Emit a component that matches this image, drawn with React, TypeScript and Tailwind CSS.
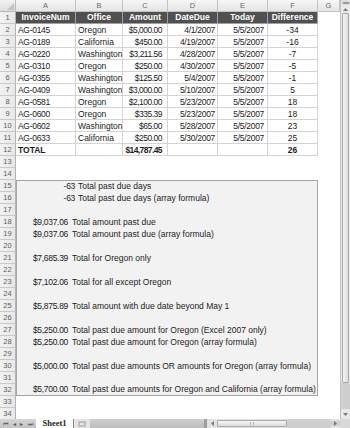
import React from "react";

const colW = [60, 47, 45, 50, 50, 50, 22];
const letters = ["A", "B", "C", "D", "E", "F", "G"];

const data: string[][] = [
  ["AG-0145", "Oregon", "$5,000.00", "4/1/2007", "5/5/2007", "-34"],
  ["AG-0189", "California", "$450.00", "4/19/2007", "5/5/2007", "-16"],
  ["AG-0220", "Washington", "$3,211.56", "4/28/2007", "5/5/2007", "-7"],
  ["AG-0310", "Oregon", "$250.00", "4/30/2007", "5/5/2007", "-5"],
  ["AG-0355", "Washington", "$125.50", "5/4/2007", "5/5/2007", "-1"],
  ["AG-0409", "Washington", "$3,000.00", "5/10/2007", "5/5/2007", "5"],
  ["AG-0581", "Oregon", "$2,100.00", "5/23/2007", "5/5/2007", "18"],
  ["AG-0600", "Oregon", "$335.39", "5/23/2007", "5/5/2007", "18"],
  ["AG-0602", "Washington", "$65.00", "5/28/2007", "5/5/2007", "23"],
  ["AG-0633", "California", "$250.00", "5/30/2007", "5/5/2007", "25"],
];

const boxLines: Record<number, [string, string]> = {
  15: ["-63", "Total past due days"],
  16: ["-63", "Total past due days (array formula)"],
  18: ["$9,037.06", "Total amount past due"],
  19: ["$9,037.06", "Total amount past due (array formula)"],
  21: ["$7,685.39", "Total for Oregon only"],
  23: ["$7,102.06", "Total for all except Oregon"],
  25: ["$5,875.89", "Total amount with due date beyond May 1"],
  27: ["$5,250.00", "Total past due amount for Oregon (Excel 2007 only)"],
  28: ["$5,250.00", "Total past due amount for Oregon (array formula)"],
  30: ["$5,000.00", "Total past due amounts OR amounts for Oregon (array formula)"],
  32: ["$5,700.00", "Total past due amounts for Oregon and California (array formula)"],
};

const font = { fontFamily: '"Liberation Sans", Arial, sans-serif' };

function DataCell({
  w,
  children,
  align,
  bold,
}: {
  w: number;
  children?: React.ReactNode;
  align: "l" | "r" | "c";
  bold?: boolean;
}) {
  const a =
    align === "l" ? "justify-start pl-[2px]" : align === "r" ? "justify-end pr-[2px]" : "justify-center";
  return (
    <div
      className={`flex h-[12px] items-center overflow-hidden whitespace-nowrap border-b border-r border-[#d4d4d4] text-[8.5px] leading-[12px] text-[#1c1c1c] ${a} ${
        bold ? "font-bold" : ""
      }`}
      style={{ width: w }}
    >
      {children}
    </div>
  );
}

export default function App() {
  const rows = Array.from({ length: 34 }, (_, i) => i + 1);
  return (
    <div className="flex h-[428px] w-[350px] flex-col overflow-hidden bg-white" style={font}>
      <div className="flex h-[419px] overflow-hidden">
        {/* main sheet */}
        <div className="flex w-[340px] flex-col">
          {/* column headers */}
          <div className="flex h-[12px] shrink-0">
            <div className="relative h-[12px] w-[16px] border-b border-r border-[#b9b9b9] bg-gradient-to-b from-[#f3f3f3] to-[#dedede]">
              <svg className="absolute bottom-[1px] right-[1px]" width="7" height="7" viewBox="0 0 7 7">
                <polygon points="7,0 7,7 0,7" fill="#c4c4c4" />
              </svg>
            </div>
            {colW.map((w, i) => (
              <div
                key={i}
                className="flex h-[12px] items-center justify-center border-b border-r border-[#c3c3c3] bg-gradient-to-b from-[#f7f7f7] to-[#e4e4e4] text-[7.5px] text-[#6a6a6a]"
                style={{ width: w }}
              >
                {letters[i]}
              </div>
            ))}
          </div>
          <div className="flex">
            {/* row headers */}
            <div className="flex w-[16px] shrink-0 flex-col">
              {rows.map((r) => (
                <div
                  key={r}
                  className="flex h-[12px] items-center justify-center border-b border-r border-[#c9c9c9] border-r-[#b3b3b3] bg-gradient-to-r from-[#f2f2f2] to-[#e8e8e8] text-[7.5px] text-[#5e5e5e]"
                >
                  {r}
                </div>
              ))}
            </div>
            {/* cells */}
            <div className="flex flex-1 flex-col">
              {/* header row 1 */}
              <div className="flex h-[12px]">
                {["InvoiceNum", "Office", "Amount", "DateDue", "Today", "Difference"].map((h, i) => (
                  <div
                    key={h}
                    className="flex h-[12px] items-center justify-center whitespace-nowrap border-r border-b border-[#a0a0a0] bg-[#505050] text-[8.5px] font-bold text-white"
                    style={{ width: colW[i] }}
                  >
                    {h}
                  </div>
                ))}
              </div>
              {data.map((d, ri) => (
                <div key={ri} className="flex h-[12px]">
                  <DataCell w={colW[0]} align="l">
                    <span className="tracking-[-0.3px]">{d[0]}</span>
                  </DataCell>
                  <DataCell w={colW[1]} align="l">
                    {d[1]}
                  </DataCell>
                  <DataCell w={colW[2]} align="r">
                    <span className="pr-[3px] tracking-[-0.5px]">{d[2]}</span>
                  </DataCell>
                  <DataCell w={colW[3]} align="r">
                    <span className="tracking-[-0.3px]">{d[3]}</span>
                  </DataCell>
                  <DataCell w={colW[4]} align="r">
                    <span className="pr-[1px] tracking-[-0.3px]">{d[4]}</span>
                  </DataCell>
                  <DataCell w={colW[5]} align="c">
                    {d[5]}
                  </DataCell>
                </div>
              ))}
              <div className="flex h-[12px]">
                <DataCell w={colW[0]} align="l" bold>
                  TOTAL
                </DataCell>
                <DataCell w={colW[1]} align="l" />
                <DataCell w={colW[2]} align="r" bold>
                  <span className="pr-[3px] tracking-[-0.6px]">$14,787.45</span>
                </DataCell>
                <DataCell w={colW[3]} align="r" />
                <DataCell w={colW[4]} align="r" />
                <DataCell w={colW[5]} align="c" bold>
                  26
                </DataCell>
              </div>
              {/* blank rows 13-14 */}
              <div className="h-[24px]" />
              {/* text box rows 15-32 */}
              <div className="flex h-[216px] w-[302px] flex-col border border-[#a6a6a6] bg-[#f2f2f2]">
                {Array.from({ length: 18 }, (_, i) => i + 15).map((r) => {
                  const line = boxLines[r];
                  const isDollar = line && line[0].startsWith("$");
                  return (
                    <div
                      key={r}
                      className={`flex items-center text-[8.5px] text-[#1c1c1c] ${
                        r === 15 || r === 32 ? "h-[11px]" : "h-[12px]"
                      }`}
                    >
                      {line && (
                        <>
                          <span
                            className={`shrink-0 whitespace-nowrap text-right tracking-[-0.3px] ${
                              isDollar ? "w-[51px]" : "w-[58px]"
                            }`}
                          >
                            {line[0]}
                          </span>
                          <span className={`whitespace-nowrap ${isDollar ? "ml-[4px]" : "ml-[3px]"}`}>
                            {line[1]}
                          </span>
                        </>
                      )}
                    </div>
                  );
                })}
              </div>
            </div>
          </div>
        </div>
        {/* vertical scrollbar */}
        <div className="flex w-[10px] flex-col border-l border-[#c4c4c4] bg-[#e9e9e9]">
          <div className="flex h-[5px] items-center justify-center bg-[#dcdcdc]">
            <div className="h-[2px] w-[6px] bg-[#9a9a9a]" />
          </div>
          <div className="flex h-[8px] items-center justify-center">
            <svg width="5" height="3" viewBox="0 0 5 3">
              <polygon points="0,3 5,3 2.5,0" fill="#7a7a7a" />
            </svg>
          </div>
          <div className="mx-[1px] h-[370px] rounded-[1px] border border-[#a9a9a9] bg-gradient-to-r from-[#f4f4f4] to-[#dcdcdc]" />
          <div className="flex-1 bg-[#cfcfcf]" />
          <div className="flex h-[10px] items-center justify-center">
            <svg width="5" height="3" viewBox="0 0 5 3">
              <polygon points="0,0 5,0 2.5,3" fill="#7a7a7a" />
            </svg>
          </div>
        </div>
      </div>
      {/* bottom tab bar */}
      <div className="flex h-[9px] items-stretch bg-gradient-to-b from-[#d6d6d6] to-[#c2c2c2]">
        <div className="flex w-[36px] items-center justify-around px-[1px] text-[6px] leading-none text-[#555]">
          <span>⏮</span>
          <span>◂</span>
          <span>▸</span>
          <span>⏭</span>
        </div>
        <div
          className="flex w-[38px] items-center justify-center border-r border-[#888] bg-white text-[8.5px] font-bold leading-none text-[#222]"
          style={{ fontFamily: '"Liberation Serif", serif' }}
        >
          Sheet1
        </div>
        <div className="flex w-[16px] items-center justify-center bg-[#e4e4e4]">
          <svg width="8" height="6" viewBox="0 0 8 6">
            <rect x="1" y="1" width="6" height="4" fill="none" stroke="#8a8a8a" strokeWidth="0.8" />
          </svg>
        </div>
        <div className="w-[114px] bg-gradient-to-b from-[#cfcfcf] to-[#bdbdbd]" />
        <div className="w-[3px] bg-[#9d9d9d]" />
        <div className="flex flex-1 items-center bg-[#e2e2e2]">
          <div className="flex w-[10px] items-center justify-center">
            <svg width="3" height="5" viewBox="0 0 3 5">
              <polygon points="3,0 3,5 0,2.5" fill="#7a7a7a" />
            </svg>
          </div>
          <div className="flex h-[7px] w-[70px] items-center justify-center rounded-[1px] border border-[#a9a9a9] bg-gradient-to-b from-[#f6f6f6] to-[#dcdcdc]">
            <div className="h-[3px] w-[4px] border-x border-[#b5b5b5]" />
          </div>
          <div className="h-full flex-1 bg-[#cfcfcf]" />
          <div className="flex w-[10px] items-center justify-center bg-[#cfcfcf]">
            <svg width="3" height="5" viewBox="0 0 3 5">
              <polygon points="0,0 0,5 3,2.5" fill="#7a7a7a" />
            </svg>
          </div>
        </div>
        <div className="w-[10px] bg-[#d8d8d8]" />
      </div>
    </div>
  );
}
